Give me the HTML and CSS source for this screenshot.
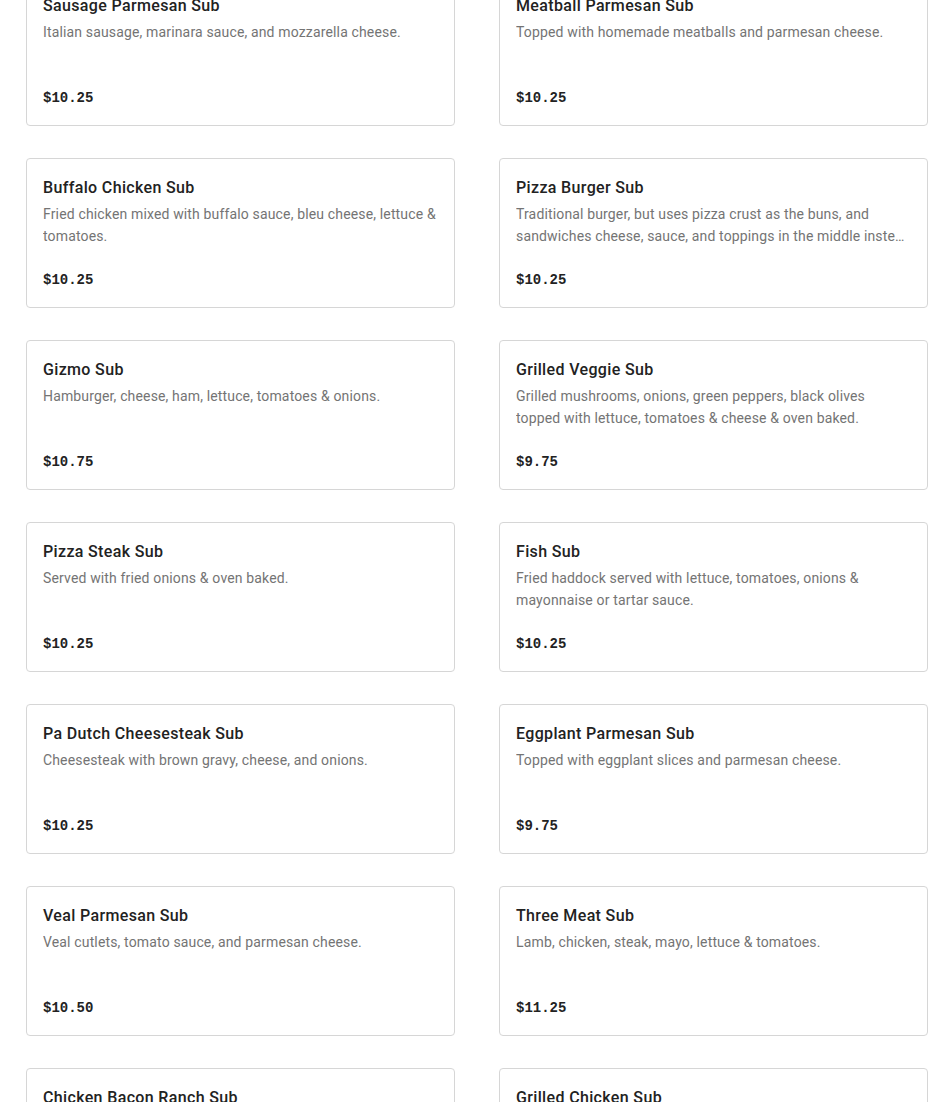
FILE: index.html
```html
<!DOCTYPE html>
<html lang="en">
<head>
<meta charset="utf-8">
<title>Subs</title>
<link rel="stylesheet" href="styles.css">
</head>
<body>
<main class="menu">
  <article class="card">
    <h3 class="card-title">Sausage Parmesan Sub</h3>
    <p class="card-desc">Italian sausage, marinara sauce, and mozzarella cheese.</p>
    <div class="card-price">$10.25</div>
  </article>
  <article class="card">
    <h3 class="card-title">Meatball Parmesan Sub</h3>
    <p class="card-desc">Topped with homemade meatballs and parmesan cheese.</p>
    <div class="card-price">$10.25</div>
  </article>
  <article class="card">
    <h3 class="card-title">Buffalo Chicken Sub</h3>
    <p class="card-desc">Fried chicken mixed with buffalo sauce, bleu cheese, lettuce &amp; tomatoes.</p>
    <div class="card-price">$10.25</div>
  </article>
  <article class="card">
    <h3 class="card-title">Pizza Burger Sub</h3>
    <p class="card-desc">Traditional burger, but uses pizza crust as the buns, and sandwiches cheese, sauce, and toppings in the middle instead of the meat patty.</p>
    <div class="card-price">$10.25</div>
  </article>
  <article class="card">
    <h3 class="card-title">Gizmo Sub</h3>
    <p class="card-desc">Hamburger, cheese, ham, lettuce, tomatoes &amp; onions.</p>
    <div class="card-price">$10.75</div>
  </article>
  <article class="card">
    <h3 class="card-title">Grilled Veggie Sub</h3>
    <p class="card-desc">Grilled mushrooms, onions, green peppers, black olives topped with lettuce, tomatoes &amp; cheese &amp; oven baked.</p>
    <div class="card-price">$9.75</div>
  </article>
  <article class="card">
    <h3 class="card-title">Pizza Steak Sub</h3>
    <p class="card-desc">Served with fried onions &amp; oven baked.</p>
    <div class="card-price">$10.25</div>
  </article>
  <article class="card">
    <h3 class="card-title">Fish Sub</h3>
    <p class="card-desc">Fried haddock served with lettuce, tomatoes, onions &amp; mayonnaise or tartar sauce.</p>
    <div class="card-price">$10.25</div>
  </article>
  <article class="card">
    <h3 class="card-title">Pa Dutch Cheesesteak Sub</h3>
    <p class="card-desc">Cheesesteak with brown gravy, cheese, and onions.</p>
    <div class="card-price">$10.25</div>
  </article>
  <article class="card">
    <h3 class="card-title">Eggplant Parmesan Sub</h3>
    <p class="card-desc">Topped with eggplant slices and parmesan cheese.</p>
    <div class="card-price">$9.75</div>
  </article>
  <article class="card">
    <h3 class="card-title">Veal Parmesan Sub</h3>
    <p class="card-desc">Veal cutlets, tomato sauce, and parmesan cheese.</p>
    <div class="card-price">$10.50</div>
  </article>
  <article class="card">
    <h3 class="card-title">Three Meat Sub</h3>
    <p class="card-desc">Lamb, chicken, steak, mayo, lettuce &amp; tomatoes.</p>
    <div class="card-price">$11.25</div>
  </article>
  <article class="card">
    <h3 class="card-title">Chicken Bacon Ranch Sub</h3>
    <p class="card-desc">Grilled chicken, bacon, ranch dressing, lettuce &amp; tomatoes.</p>
    <div class="card-price">$10.75</div>
  </article>
  <article class="card">
    <h3 class="card-title">Grilled Chicken Sub</h3>
    <p class="card-desc">Grilled chicken breast, lettuce, tomatoes &amp; onions.</p>
    <div class="card-price">$10.25</div>
  </article>
</main>
</body>
</html>
```
FILE: styles.css
```css
html, body {
  margin: 0;
  padding: 0;
  background: #ffffff;
}

body {
  font-family: "Roboto", "Liberation Sans", sans-serif;
  color: #222222;
  overflow: hidden;
}

.menu {
  display: grid;
  grid-template-columns: 429px 429px;
  column-gap: 44px;
  row-gap: 32px;
  padding-left: 26px;
  margin-top: -24px;
}

.card {
  border: 1px solid #d6d6d6;
  border-radius: 4px;
  padding: 16px;
  height: 150px;
  box-sizing: border-box;
  display: flex;
  flex-direction: column;
}

.card-title {
  margin: 1px 0 0;
  font-size: 16px;
  line-height: 24px;
  font-weight: 500;
  letter-spacing: 0.35px;
  color: #222222;
}

.card-desc {
  margin: 3px 0 0;
  font-size: 14px;
  line-height: 22px;
  letter-spacing: 0.15px;
  color: #747474;
  height: 44px;
  overflow: hidden;
  display: -webkit-box;
  -webkit-line-clamp: 2;
  -webkit-box-orient: vertical;
}

.card-price {
  margin-top: 23px;
  font-family: "Liberation Mono", "DejaVu Sans Mono", monospace;
  font-weight: 700;
  font-size: 14px;
  line-height: 22px;
  color: #222222;
}
```
